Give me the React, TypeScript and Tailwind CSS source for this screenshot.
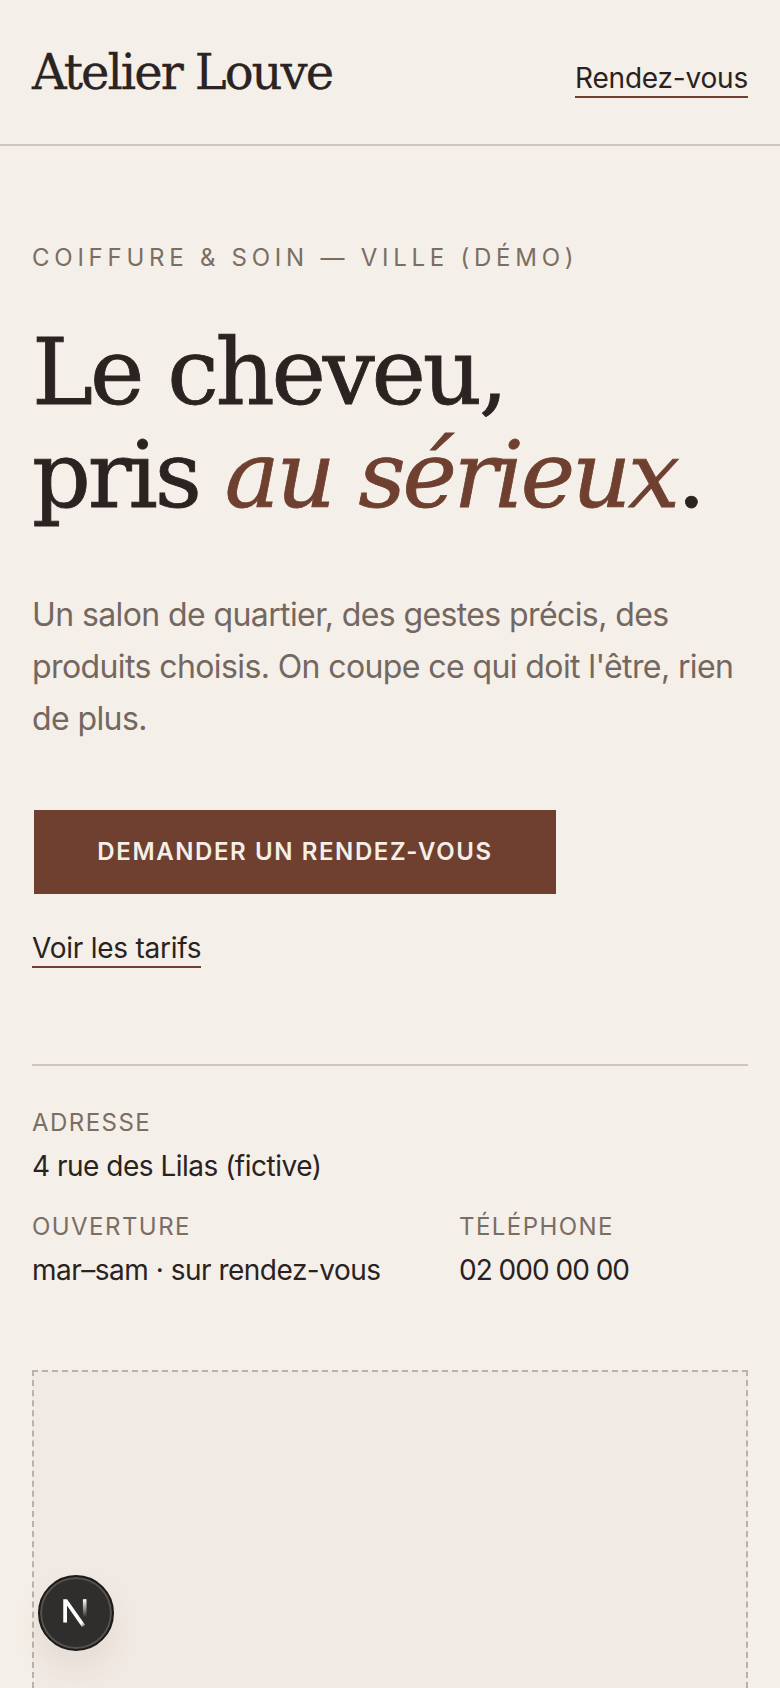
const serif = "font-['DejaVu_Serif',serif]";

const InfoItem = ({ label, value }: { label: string; value: React.ReactNode }) => (
  <div>
    <div className="text-[24px] leading-[36px] tracking-[1.45px] text-[#7a6d64]">{label}</div>
    <div className="mt-[4px] text-[28px] leading-[42px] tracking-[-0.5px] text-[#2a2220]">{value}</div>
  </div>
);

const NextBadge = () => (
  <div className="fixed bottom-[37px] left-[38px] flex h-[76px] w-[76px] items-center justify-center rounded-full border-2 border-[#1b1b1b] bg-[#2f2e2c] shadow-[0_0_0_2px_#55524f_inset,0_16px_32px_rgba(90,60,40,0.08)]">
    <svg width="34" height="34" viewBox="0 0 32 32" fill="none">
      <defs>
        <linearGradient id="fadeDiagonal" x1="14" y1="12" x2="27" y2="29" gradientUnits="userSpaceOnUse">
          <stop stopColor="#fff" />
          <stop offset="0.7" stopColor="#fff" />
          <stop offset="1" stopColor="#fff" stopOpacity="0" />
        </linearGradient>
        <linearGradient id="fadeRight" x1="24" y1="3" x2="24" y2="20" gradientUnits="userSpaceOnUse">
          <stop stopColor="#fff" />
          <stop offset="1" stopColor="#fff" stopOpacity="0" />
        </linearGradient>
      </defs>
      <path d="M4 3h3.6l17 24.4-3 1.8L7.5 9v16H4V3Z" fill="url(#fadeDiagonal)" />
      <rect x="22.5" y="3" width="3.4" height="18" fill="url(#fadeRight)" />
    </svg>
  </div>
);

export default function App() {
  return (
    <div className="h-screen overflow-hidden bg-[#f4efe8] font-['Inter',sans-serif]">
      <header className="flex h-[146px] items-start justify-between border-b-2 border-[#cdc5be] px-8 pt-[42px]">
        <div className={`${serif} text-[48px] leading-[60px] tracking-[-2px] text-[#2a2321] [-webkit-text-stroke:0.3px_#2a2321]`}>
          Atelier Louve
        </div>
        <a className="mt-[18px] border-b-2 border-[#6f4030] text-[28px] leading-[36px] tracking-[-0.2px] text-[#2a2220]">
          Rendez-vous
        </a>
      </header>

      <main className="px-8 pt-[97px]">
        <p className="text-[24px] leading-[30px] tracking-[4.75px] text-[#7a6d64]">COIFFURE &amp; SOIN — VILLE (DÉMO)</p>

        <h1 className={`${serif} mt-[48px] text-[92px] leading-[103px] tracking-[-3.2px] text-[#2a2321] [-webkit-text-stroke:0.8px_#2a2321]`}>
          Le cheveu,
          <br />
          pris <em className="text-[#6f4030] [-webkit-text-stroke:0.8px_#6f4030]">au sérieux</em>.
        </h1>

        <p className="mt-[62px] text-[32px] leading-[52px] tracking-[-0.6px] text-[#74675f]">
          Un salon de quartier, des gestes précis, des produits choisis. On coupe ce qui doit l'être, rien de plus.
        </p>

        <button className="ml-[2px] mt-[65px] flex h-[84px] w-[522px] items-center justify-center bg-[#6f4030] text-[24px] font-semibold tracking-[1.6px] text-[#f4efe8]">
          DEMANDER UN RENDEZ-VOUS
        </button>

        <div className="mt-[37px]">
          <a className="inline-block border-b-2 border-[#6f4030] text-[28px] leading-[35px] tracking-[-0.25px] text-[#2a2220]">
            Voir les tarifs
          </a>
        </div>

        <section className="mt-[96px] border-t-2 border-[#cdc5be] pt-[39px]">
          <InfoItem label="ADRESSE" value="4 rue des Lilas (fictive)" />
          <div className="mt-[22px] grid grid-cols-[427px_1fr]">
            <InfoItem label="OUVERTURE" value="mar–sam · sur rendez-vous" />
            <InfoItem label="TÉLÉPHONE" value={<span className="tracking-[-1px]">02 000 00 00</span>} />
          </div>
        </section>

        <div className="mt-[79px] h-[600px] border-2 border-dashed border-[#b9b2aa] bg-[#f1e9e3]" />
      </main>

      <NextBadge />
    </div>
  );
}
